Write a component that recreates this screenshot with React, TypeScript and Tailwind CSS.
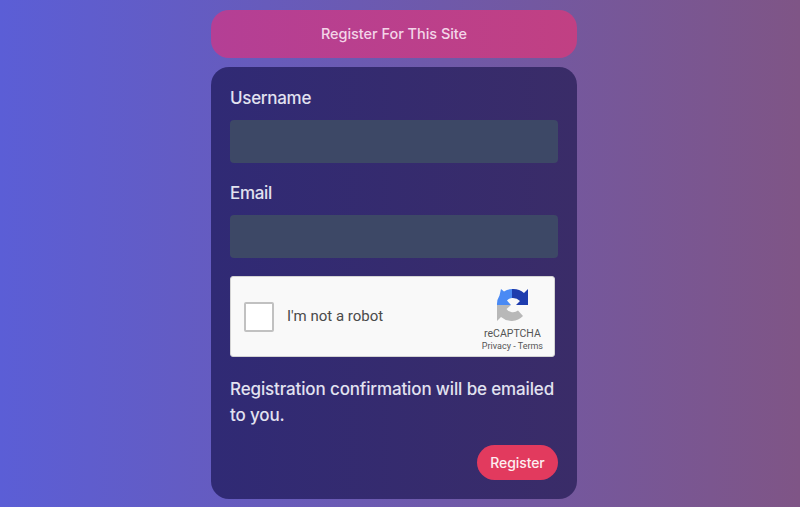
export default function App() {
  return (
    <div className="h-[507px] w-full overflow-hidden bg-[linear-gradient(90deg,#5b5ed6,#7f5586)] pr-[12px] font-['Inter',sans-serif]">
      <div className="mx-auto w-[366px] pt-[10px]">
        <div className="flex h-[48px] items-center justify-center rounded-[18px] bg-[linear-gradient(90deg,#b43f95,#c14083)] text-[14.5px] font-medium tracking-[-0.04px] text-[#f3d5e8]">
          Register For This Site
        </div>

        <form className="mt-[9px] h-[432px] rounded-[18px] bg-[linear-gradient(90deg,#302a75,#3a2c68)] px-[19px] pt-[20px] text-[#e2e2f0]">
          <label className="block text-[17px] font-[450] leading-[22px] tracking-[-0.3px]">Username</label>
          <div className="mt-[11px] h-[43px] rounded-[4px] bg-[#3d4866]" />

          <label className="mt-[19px] block text-[17px] font-[450] leading-[22px] tracking-[-0.3px]">Email</label>
          <div className="mt-[11px] h-[43px] rounded-[4px] bg-[#3d4866]" />

          <div className="mt-[18px] flex h-[81px] w-[325px] items-center rounded-[3px] border border-[#d3d3d3] bg-[#f9f9f9] pl-[13px] pr-[11px] font-['Roboto',sans-serif] text-[#4a4a4a]">
            <div className="h-[30px] w-[30px] rounded-[2px] border-2 border-[#c1c1c1] bg-white" />
            <span className="ml-[13px] text-[15px]">I'm not a robot</span>
            <div className="ml-auto mt-[5px] flex flex-col items-center">
              <svg width="33" height="34" viewBox="0 0 33 34">
                <path d="M5 1 L8 3.5 A15 15 0 0 1 16 1 L16 10 A7 7 0 0 0 11 12.5 L15 17 L1 17 A16 16 0 0 1 3.5 7.5 Z" fill="#4a8af4" />
                <path d="M16 1 A16 16 0 0 1 28 5 L32 1 L32 17 L20 17 L24 13 A10 10 0 0 0 16 10 Z" fill="#1e3cae" />
                <path d="M1 17 L15 17 L10.5 21 A8 8 0 0 0 22 22.5 L27 28 A16 16 0 0 1 5 29 L1 33 Z" fill="#b8b8b8" />
              </svg>
              <span className="mt-[6px] text-[10.5px] leading-[12px] text-[#555]">reCAPTCHA</span>
              <span className="mt-[1px] text-[9px] leading-[10px] text-[#555]">Privacy - Terms</span>
            </div>
          </div>

          <p className="mt-[19px] text-[17px] font-[450] leading-[26px] tracking-[-0.14px]">Registration confirmation will be emailed to you.</p>

          <div className="mt-[17px] flex justify-end">
            <button type="button" className="h-[35px] w-[81px] rounded-full bg-[#e23a5e] text-[14px] font-medium tracking-[-0.1px] text-[#fdeef1]">
              Register
            </button>
          </div>
        </form>
      </div>
    </div>
  );
}
